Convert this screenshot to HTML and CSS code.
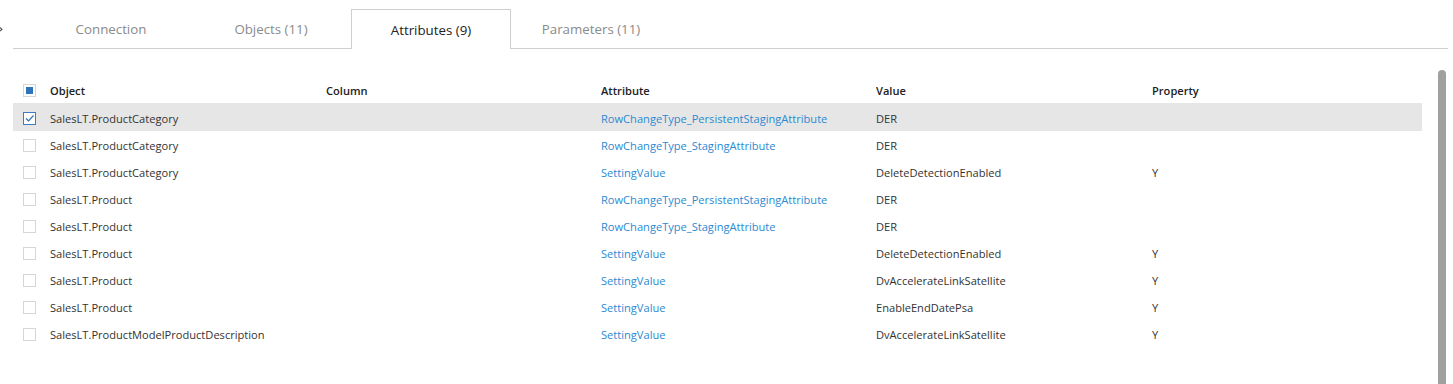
FILE: index.html
```html
<!DOCTYPE html>
<html>
<head>
<meta charset="utf-8">
<link rel="stylesheet" href="styles.css">
</head>
<body>
<div class="page">
  <div class="tabbar">
    <span class="edge-chevron"><svg width="4" height="6" viewBox="0 0 4 6"><path d="M0 1.5 L2 3.5 L0 5" fill="none" stroke="#555" stroke-width="1.1"/></svg></span>
    <div class="tabs">
      <div class="tab">Connection</div>
      <div class="tab">Objects (11)</div>
      <div class="tab active">Attributes (9)</div>
      <div class="tab">Parameters (11)</div>
    </div>
  </div>
  <div class="content">
    <div class="grid">
      <div class="row head">
        <div class="cell cb"><span class="box partial"><span class="dot"></span></span></div>
        <div class="cell">Object</div>
        <div class="cell">Column</div>
        <div class="cell">Attribute</div>
        <div class="cell">Value</div>
        <div class="cell">Property</div>
      </div>
      <div class="row selected">
        <div class="cell cb"><span class="box checked"><svg width="11" height="11" viewBox="0 0 11 11"><path d="M2 5.5 L4.5 8 L9.5 2.5" fill="none" stroke="#2b73b9" stroke-width="1.2"/></svg></span></div>
        <div class="cell">SalesLT.ProductCategory</div>
        <div class="cell"></div>
        <div class="cell link">RowChangeType_PersistentStagingAttribute</div>
        <div class="cell">DER</div>
        <div class="cell"></div>
      </div>
      <div class="row">
        <div class="cell cb"><span class="box"></span></div>
        <div class="cell">SalesLT.ProductCategory</div>
        <div class="cell"></div>
        <div class="cell link">RowChangeType_StagingAttribute</div>
        <div class="cell">DER</div>
        <div class="cell"></div>
      </div>
      <div class="row">
        <div class="cell cb"><span class="box"></span></div>
        <div class="cell">SalesLT.ProductCategory</div>
        <div class="cell"></div>
        <div class="cell link">SettingValue</div>
        <div class="cell">DeleteDetectionEnabled</div>
        <div class="cell">Y</div>
      </div>
      <div class="row">
        <div class="cell cb"><span class="box"></span></div>
        <div class="cell">SalesLT.Product</div>
        <div class="cell"></div>
        <div class="cell link">RowChangeType_PersistentStagingAttribute</div>
        <div class="cell">DER</div>
        <div class="cell"></div>
      </div>
      <div class="row">
        <div class="cell cb"><span class="box"></span></div>
        <div class="cell">SalesLT.Product</div>
        <div class="cell"></div>
        <div class="cell link">RowChangeType_StagingAttribute</div>
        <div class="cell">DER</div>
        <div class="cell"></div>
      </div>
      <div class="row">
        <div class="cell cb"><span class="box"></span></div>
        <div class="cell">SalesLT.Product</div>
        <div class="cell"></div>
        <div class="cell link">SettingValue</div>
        <div class="cell">DeleteDetectionEnabled</div>
        <div class="cell">Y</div>
      </div>
      <div class="row">
        <div class="cell cb"><span class="box"></span></div>
        <div class="cell">SalesLT.Product</div>
        <div class="cell"></div>
        <div class="cell link">SettingValue</div>
        <div class="cell">DvAccelerateLinkSatellite</div>
        <div class="cell">Y</div>
      </div>
      <div class="row">
        <div class="cell cb"><span class="box"></span></div>
        <div class="cell">SalesLT.Product</div>
        <div class="cell"></div>
        <div class="cell link">SettingValue</div>
        <div class="cell">EnableEndDatePsa</div>
        <div class="cell">Y</div>
      </div>
      <div class="row">
        <div class="cell cb"><span class="box"></span></div>
        <div class="cell">SalesLT.ProductModelProductDescription</div>
        <div class="cell"></div>
        <div class="cell link">SettingValue</div>
        <div class="cell">DvAccelerateLinkSatellite</div>
        <div class="cell">Y</div>
      </div>
    </div>
    <div class="scrollbar"></div>
  </div>
</div>
</body>
</html>
```

FILE: styles.css
```css
html, body {
  margin: 0;
  padding: 0;
  background: #fff;
  overflow: hidden;
}
body {
  font-family: "Open Sans", "Noto Sans", sans-serif;
  color: #333;
}
.page {
  width: 1453px;
  height: 384px;
  overflow: hidden;
}
.tabbar {
  display: flex;
  align-items: flex-end;
  height: 49px;
  position: relative;
}
.edge-chevron {
  position: absolute;
  left: 0;
  top: 26px;
  width: 4px;
  height: 6px;
  overflow: hidden;
  display: block;
}
.edge-chevron svg {
  display: block;
}
.tabs {
  display: flex;
  margin-left: 13px;
  width: 1435px;
  border-bottom: 1px solid #cfcfcf;
  padding-left: 18px;
  box-sizing: border-box;
  height: 40px;
}
.tab {
  width: 160px;
  height: 39px;
  box-sizing: border-box;
  display: flex;
  align-items: center;
  justify-content: center;
  font-size: 13.3px;
  color: #8a8a8a;
  padding-top: 0;
}
.tab.active {
  color: #222;
  background: #fff;
  border: 1px solid #cfcfcf;
  border-bottom: none;
  height: 40px;
  margin-bottom: -1px;
}
.content {
  display: flex;
  height: 335px;
  padding-top: 21px;
  box-sizing: border-box;
}
.grid {
  margin-left: 13px;
  width: 1409px;
  padding-top: 7px;
}
.row {
  display: grid;
  grid-template-columns: 37px 276px 275px 275px 276px 1fr;
  height: 27px;
  align-items: center;
  font-size: 11.1px;
  padding-top: 1px;
  box-sizing: border-box;
}
.row.head {
  height: 26px;
  font-weight: 600;
  color: #222;
}
.row.selected {
  background: #e6e6e6;
  height: 28px;
  padding-top: 2px;
}
.cell {
  white-space: nowrap;
  overflow: hidden;
}
.cell.link {
  color: #2b8ad2;
}
.cb {
  padding-left: 10px;
  display: flex;
  align-items: center;
}
.box {
  width: 13px;
  height: 13px;
  box-sizing: border-box;
  border: 1px solid #d6d6d6;
  background: #fff;
  display: flex;
  align-items: center;
  justify-content: center;
}
.box.checked {
  border-color: #3c7cc0;
}
.box .dot {
  width: 7px;
  height: 7px;
  background: #2f74b8;
}
.scrollbar {
  margin-left: auto;
  margin-right: 7px;
  width: 8px;
  background: #a0a0a0;
  border-radius: 4px 4px 0 0;
  height: 320px;
}
```
